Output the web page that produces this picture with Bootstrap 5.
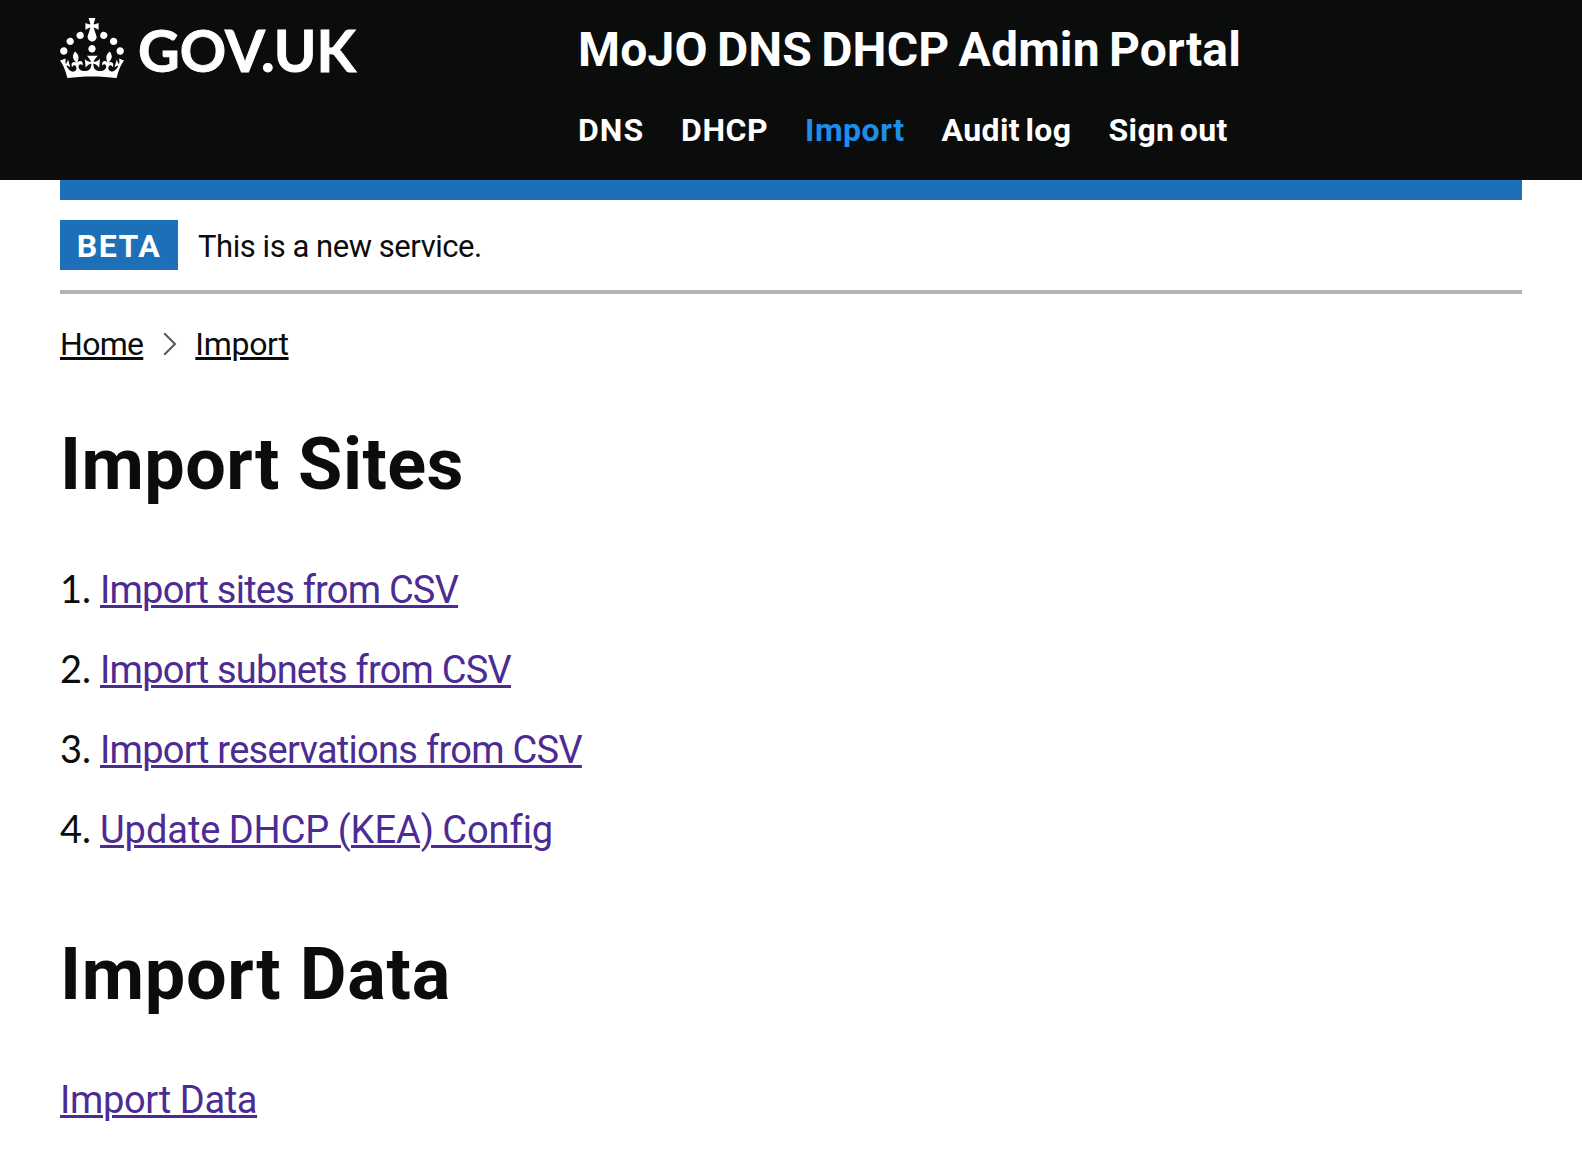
<!DOCTYPE html>
<html lang="en">
<head>
<meta charset="utf-8">
<meta name="viewport" content="width=device-width, initial-scale=1">
<title>MoJO DNS DHCP Admin Portal</title>
<link href="https://cdn.jsdelivr.net/npm/bootstrap@5.3.0/dist/css/bootstrap.min.css" rel="stylesheet">
<style>
  body { font-family: Roboto, "Liberation Sans", sans-serif; color: #0b0c0c; background: #fff; font-variant-ligatures: none; overflow: hidden; }
  .page-width { padding: 0 60px; }
  .site-header { background: #0b0c0c; height: 180px; }
  .brand-col { width: 517px; padding-top: 18px; gap: 14px; }
  .brand-text { font: 700 57.5px/60px Lato, sans-serif; color: #fff; padding-top: 2px; letter-spacing: .1px; -webkit-text-stroke: .9px #fff; }
  .service-col { padding-top: 25px; }
  .service-name { font-size: 48px; line-height: 50px; font-weight: 700; letter-spacing: .15px; word-spacing: -2.8px; color: #fff; text-decoration: none; padding-left: 1px; }
  .site-nav { margin-top: 35px; gap: 37px; padding-left: 1px; }
  .site-nav a { font-size: 32px; line-height: 40px; font-weight: 700; color: #fff; text-decoration: none; letter-spacing: .5px; }
  .site-nav a.two-words { letter-spacing: .4px; word-spacing: -3px; }
  .site-nav a:first-child { letter-spacing: 1px; }
  .site-nav a.current { color: #1d8feb; }
  .blue-bar { height: 20px; background: #1d70b8; }
  .phase { height: 94px; padding: 20px 0; border-bottom: 4px solid #b1b4b6; gap: 20px; }
  .phase-tag { height: 50px; width: 118px; font-size: 32px; line-height: 52px; letter-spacing: 1.5px; font-weight: 700; color: #fff; background: #1d70b8; }
  .phase-text { font-size: 31px; line-height: 50px; letter-spacing: -.45px; padding-top: 2px; }
  .crumbs { margin: 30px 0 0; padding: 0; font-size: 32px; line-height: 40px; }
  .crumbs a { color: #0b0c0c; letter-spacing: -.7px; }
  .crumbs .last { letter-spacing: -.3px; }
  .crumbs svg { margin: 0 18px 0 20px; }
  a.ruled { text-decoration: underline; text-decoration-thickness: 3px; text-underline-offset: 2px; }
  .heading-xl { font-size: 72px; line-height: 80px; font-weight: 700; letter-spacing: .45px; margin: 61px 0 60px; }
  .heading-xl.wide { letter-spacing: .7px; margin-top: 80px; }
  .steps { font-size: 38px; line-height: 50px; }
  .steps li { height: 50px; margin-bottom: 30px; }
  .step-no { width: 40px; line-height: 44px; font-family: Lato, sans-serif; }
  .visited { color: #4c2c92; }
  .ls-a { letter-spacing: -.78px; } .ls-b { letter-spacing: -.76px; } .ls-c { letter-spacing: -.71px; }
  .ls-d { letter-spacing: -.05px; word-spacing: -1px; } .ls-e { letter-spacing: -.36px; }
</style>
<script src="https://cdn.jsdelivr.net/npm/bootstrap@5.3.0/dist/js/bootstrap.bundle.min.js"></script>
</head>
<body>
<header class="site-header page-width d-flex">
  <a href="#" class="brand-col d-flex align-items-start flex-shrink-0 text-decoration-none">
    <svg width="64" height="60" viewBox="0 0 32 30" fill="#fff" aria-hidden="true"><path d="M22.6 10.4c-1 .4-2-.1-2.4-1-.4-.9.1-2 1-2.4.9-.4 2 .1 2.4 1s-.1 2-1 2.4m-5.9 6.7c-.9.4-2-.1-2.4-1-.4-.9.1-2 1-2.4.9-.4 2 .1 2.4 1s-.1 2-1 2.4m10.8-3.7c-1 .4-2-.1-2.4-1-.4-.9.1-2 1-2.4.9-.4 2 .1 2.4 1s0 2-1 2.4m3.3 4.8c-1 .4-2-.1-2.4-1-.4-.9.1-2 1-2.4.9-.4 2 .1 2.4 1s-.1 2-1 2.4M17 4.7l2.3 1.2V2.5l-2.3.7-.2-.2.9-3h-3.4l.9 3-.2.2c-.1.1-2.3-.7-2.3-.7v3.4L15 4.7c.1.1.1.2.2.2l-1.3 4c-.1.2-.1.4-.1.6 0 1.1.8 2 1.9 2.2h.7c1-.2 1.9-1.1 1.9-2.1 0-.2 0-.4-.1-.6l-1.3-4c-.1-.2 0-.2.1-.3m-7.6 5.7c.9.4 2-.1 2.4-1 .4-.9-.1-2-1-2.4-.9-.4-2 .1-2.4 1s0 2 1 2.4m-5 3c.9.4 2-.1 2.4-1 .4-.9-.1-2-1-2.4-.9-.4-2 .1-2.4 1s.1 2 1 2.4m-3.2 4.8c.9.4 2-.1 2.4-1 .4-.9-.1-2-1-2.4-.9-.4-2 .1-2.4 1s0 2 1 2.4m14.8 11c4.4 0 8.6.3 12.3.8 1.1-4.5 2.4-7 3.7-8.8l-2.5-.9c.2 1.3.3 1.9 0 2.7-.4-.4-.8-1.1-1.1-2.3l-1.2 4c.7-.5 1.3-.8 2-.9-1.1 2.5-2.6 3.1-3.5 3-1.1-.2-1.7-1.2-1.5-2.1.3-1.2 1.5-1.5 2.1-.1 1.1-2.3-.8-3-2-2.3 1.9-1.9 2.1-3.5.6-5.6-2.1 1.6-2.1 3.2-1.2 5.5-1.2-1.4-3.2-.6-2.5 1.6.9-1.4 2.1-.5 1.9.8-.2 1.1-1.7 2.1-3.5 1.9-2.7-.2-2.9-2.1-2.9-3.6.7-.1 1.9.5 2.9 1.9l.4-4.3c-1.1 1.1-2.1 1.4-3.2 1.4.4-1.2 2.1-3 2.1-3h-5.4s1.7 1.9 2.1 3c-1.1 0-2.1-.2-3.2-1.4l.4 4.3c1-1.4 2.2-2 2.9-1.9-.1 1.5-.2 3.4-2.9 3.6-1.9.2-3.4-.8-3.5-1.9-.2-1.3 1-2.2 1.9-.8.7-2.3-1.2-3-2.5-1.6.9-2.2.9-3.9-1.2-5.5-1.5 2-1.3 3.7.6 5.6-1.2-.7-3.1 0-2 2.3.6-1.4 1.8-1.1 2.1.1.2.9-.3 1.9-1.5 2.1-.9.2-2.4-.5-3.5-3 .6 0 1.2.3 2 .9l-1.2-4c-.3 1.1-.7 1.9-1.1 2.3-.3-.8-.2-1.4 0-2.7l-2.9.9C1.3 23 2.6 25.5 3.7 30c3.7-.5 7.9-.8 12.3-.8"/></svg>
    <span class="brand-text">GOV.UK</span>
  </a>
  <div class="service-col d-flex flex-column text-nowrap">
    <a href="#" class="service-name">MoJO DNS DHCP Admin Portal</a>
    <nav class="site-nav d-flex">
      <a href="#">DNS</a>
      <a href="#">DHCP</a>
      <a href="#" class="current">Import</a>
      <a href="#" class="two-words">Audit log</a>
      <a href="#" class="two-words">Sign out</a>
    </nav>
  </div>
</header>
<main class="page-width">
  <div class="blue-bar"></div>
  <div class="phase d-flex">
    <strong class="phase-tag text-center">BETA</strong>
    <span class="phase-text">This is a new service.</span>
  </div>
  <nav class="crumbs d-flex align-items-center" aria-label="Breadcrumb">
    <a href="#" class="ruled">Home</a>
    <svg width="14" height="24" viewBox="0 0 14 24" fill="none" stroke="#505a5f" stroke-width="2"><path d="M1.2 1.2 12 12 1.2 22.8"/></svg>
    <a href="#" class="ruled last">Import</a>
  </nav>
  <h1 class="heading-xl">Import Sites</h1>
  <ol class="steps list-unstyled mb-0">
    <li class="d-flex align-items-baseline"><span class="step-no">1.</span><a href="#" class="ruled visited ls-a">Import sites from CSV</a></li>
    <li class="d-flex align-items-baseline"><span class="step-no">2.</span><a href="#" class="ruled visited ls-b">Import subnets from CSV</a></li>
    <li class="d-flex align-items-baseline"><span class="step-no">3.</span><a href="#" class="ruled visited ls-c">Import reservations from CSV</a></li>
    <li class="d-flex align-items-baseline"><span class="step-no">4.</span><a href="#" class="ruled visited ls-d">Update DHCP (KEA) Config</a></li>
  </ol>
  <h1 class="heading-xl wide">Import Data</h1>
  <div class="steps"><a href="#" class="ruled visited ls-e">Import Data</a></div>
</main>
</body>
</html>
